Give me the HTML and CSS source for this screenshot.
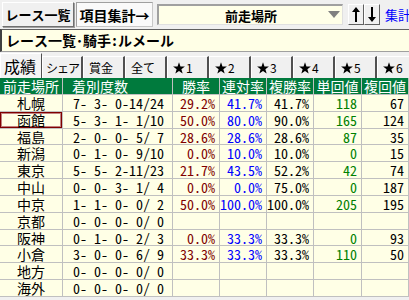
FILE: index.html
```html
<!DOCTYPE html>
<html lang="ja">
<head>
<meta charset="utf-8">
<link rel="stylesheet" href="styles.css">
</head>
<body>
<div class="top">
  <div class="btn b1">レース一覧</div>
  <div class="btn b2">項目集計→</div>
  <div class="sel"><span class="sel-text">前走場所</span><svg class="tri" width="12" height="7" viewBox="0 0 12 7"><polygon points="0,0 12,0 6,7" fill="#808080"/></svg></div>
  <div class="arr up"><svg width="8" height="15" viewBox="0 0 8 15"><path d="M4 0 L8 5 L5 5 L5 15 L3 15 L3 5 L0 5 Z" fill="#000"/></svg></div>
  <div class="arr"><svg width="8" height="15" viewBox="0 0 8 15"><path d="M4 15 L8 10 L5 10 L5 0 L3 0 L3 10 L0 10 Z" fill="#000"/></svg></div>
  <div class="link">集計</div>
</div>
<div class="title">レース一覧･騎手:ルメール</div>
<div class="tabs">
  <div class="tab on">成績</div>
  <div class="tab t2">シェア</div>
  <div class="tab">賞金</div>
  <div class="tab">全て</div>
  <div class="tab"><svg class="st" width="12" height="12" viewBox="0 0 12 12"><polygon points="6,0.3 7.47,4.48 11.9,4.58 8.38,7.27 9.65,11.52 6,9 2.35,11.52 3.62,7.27 0.1,4.58 4.53,4.48" fill="#000"/></svg>1</div>
  <div class="tab"><svg class="st" width="12" height="12" viewBox="0 0 12 12"><polygon points="6,0.3 7.47,4.48 11.9,4.58 8.38,7.27 9.65,11.52 6,9 2.35,11.52 3.62,7.27 0.1,4.58 4.53,4.48" fill="#000"/></svg>2</div>
  <div class="tab"><svg class="st" width="12" height="12" viewBox="0 0 12 12"><polygon points="6,0.3 7.47,4.48 11.9,4.58 8.38,7.27 9.65,11.52 6,9 2.35,11.52 3.62,7.27 0.1,4.58 4.53,4.48" fill="#000"/></svg>3</div>
  <div class="tab"><svg class="st" width="12" height="12" viewBox="0 0 12 12"><polygon points="6,0.3 7.47,4.48 11.9,4.58 8.38,7.27 9.65,11.52 6,9 2.35,11.52 3.62,7.27 0.1,4.58 4.53,4.48" fill="#000"/></svg>4</div>
  <div class="tab"><svg class="st" width="12" height="12" viewBox="0 0 12 12"><polygon points="6,0.3 7.47,4.48 11.9,4.58 8.38,7.27 9.65,11.52 6,9 2.35,11.52 3.62,7.27 0.1,4.58 4.53,4.48" fill="#000"/></svg>5</div>
  <div class="tab"><svg class="st" width="12" height="12" viewBox="0 0 12 12"><polygon points="6,0.3 7.47,4.48 11.9,4.58 8.38,7.27 9.65,11.52 6,9 2.35,11.52 3.62,7.27 0.1,4.58 4.53,4.48" fill="#000"/></svg>6</div>
</div>
<div class="grid">
  <div class="h">前走場所</div><div class="h hl">着別度数</div><div class="h">勝率</div><div class="h">連対率</div><div class="h">複勝率</div><div class="h">単回値</div><div class="h">複回値</div>

  <div class="c n">札幌</div><div class="c d">7- 3- 0-14/24</div><div class="c v r">29.2%</div><div class="c v b">41.7%</div><div class="c v">41.7%</div><div class="c v g">118</div><div class="c v">67</div>
  <div class="c n sel-cell">函館</div><div class="c d">5- 3- 1- 1/10</div><div class="c v r">50.0%</div><div class="c v b">80.0%</div><div class="c v">90.0%</div><div class="c v g">165</div><div class="c v">124</div>
  <div class="c n">福島</div><div class="c d">2- 0- 0- 5/ 7</div><div class="c v r">28.6%</div><div class="c v b">28.6%</div><div class="c v">28.6%</div><div class="c v g">87</div><div class="c v">35</div>
  <div class="c n">新潟</div><div class="c d">0- 1- 0- 9/10</div><div class="c v r">0.0%</div><div class="c v b">10.0%</div><div class="c v">10.0%</div><div class="c v g">0</div><div class="c v">15</div>
  <div class="c n">東京</div><div class="c d">5- 5- 2-11/23</div><div class="c v r">21.7%</div><div class="c v b">43.5%</div><div class="c v">52.2%</div><div class="c v g">42</div><div class="c v">74</div>
  <div class="c n">中山</div><div class="c d">0- 0- 3- 1/ 4</div><div class="c v r">0.0%</div><div class="c v b">0.0%</div><div class="c v">75.0%</div><div class="c v g">0</div><div class="c v">187</div>
  <div class="c n">中京</div><div class="c d">1- 1- 0- 0/ 2</div><div class="c v r">50.0%</div><div class="c v b">100.0%</div><div class="c v">100.0%</div><div class="c v g">205</div><div class="c v">195</div>
  <div class="c n">京都</div><div class="c d">0- 0- 0- 0/ 0</div><div class="c v"></div><div class="c v"></div><div class="c v"></div><div class="c v"></div><div class="c v"></div>
  <div class="c n">阪神</div><div class="c d">0- 1- 0- 2/ 3</div><div class="c v r">0.0%</div><div class="c v b">33.3%</div><div class="c v">33.3%</div><div class="c v g">0</div><div class="c v">93</div>
  <div class="c n">小倉</div><div class="c d">3- 0- 0- 6/ 9</div><div class="c v r">33.3%</div><div class="c v b">33.3%</div><div class="c v">33.3%</div><div class="c v g">110</div><div class="c v">50</div>
  <div class="c n">地方</div><div class="c d">0- 0- 0- 0/ 0</div><div class="c v"></div><div class="c v"></div><div class="c v"></div><div class="c v"></div><div class="c v"></div>
  <div class="c n">海外</div><div class="c d">0- 0- 0- 0/ 0</div><div class="c v"></div><div class="c v"></div><div class="c v"></div><div class="c v"></div><div class="c v"></div>
</div>
</body>
</html>
```

FILE: styles.css
```css
html, body {
  margin: 0;
  padding: 0;
  background: #f0f0f0;
  width: 409px;
  height: 300px;
  overflow: hidden;
  font-family: "Noto Sans Mono CJK JP", "Noto Sans CJK JP", sans-serif;
  font-feature-settings: "hwid" 1;
  color: #000;
}

.top {
  display: flex;
  align-items: center;
  height: 29px;
  padding-left: 2px;
  box-sizing: border-box;
}
.top > * { flex: none; }

.btn {
  height: 25px;
  box-sizing: border-box;
  display: flex;
  align-items: center;
  justify-content: center;
  font-weight: bold;
  font-size: 13px;
  border: 1px solid;
  border-color: #fff #707070 #707070 #fff;
  background: #f0f0f0;
  box-shadow: 1px 1px 0 #a0a0a0;
}
.b1 { width: 72px; }
.b2 {
  width: 77px;
  margin-left: 2px;
  font-size: 14px;
  background: #fafafa;
  border-color: #a0a0a0 #c8c8c8 #c8c8c8 #a0a0a0;
  box-shadow: none;
}

.sel {
  margin-left: 4px;
  width: 186px;
  height: 21px;
  box-sizing: border-box;
  background: #ffffe8;
  border-top: 2px solid #a0a0a0;
  border-left: 2px solid #a0a0a0;
  border-right: 1px solid #e0e0e0;
  border-bottom: 1px solid #e0e0e0;
  display: flex;
  align-items: center;
  position: relative;
}
.sel-text {
  font-weight: bold;
  font-size: 13px;
  margin-left: 66px;
}
.tri {
  position: absolute;
  right: 2px;
  top: 5px;
}

.arr {
  width: 16px;
  height: 21px;
  box-sizing: border-box;
  border: 1px solid;
  border-color: #fff #606060 #606060 #fff;
  background: #f0f0f0;
  display: flex;
  align-items: center;
  justify-content: center;
}
.arr.up { margin-left: 5px; }

.link {
  margin-left: 5px;
  color: #0000ff;
  font-size: 13px;
  white-space: nowrap;
  flex: 1 1 auto !important;
  min-width: 0;
  overflow: hidden;
}

.title {
  height: 23px;
  box-sizing: border-box;
  background: #ffffe6;
  border-top: 1px solid #606060;
  border-left: 2px solid #404040;
  border-bottom: 1px solid #a0a0a0;
  font-weight: bold;
  font-size: 14px;
  line-height: 21px;
  padding-left: 4px;
  white-space: nowrap;
}

.tabs {
  display: flex;
  height: 26px;
  align-items: flex-end;
  overflow: hidden;
}
.tab {
  width: 42px;
  flex: none;
  height: 22px;
  box-sizing: border-box;
  border-top: 1px solid #fff;
  border-left: 1px solid #fff;
  border-right: 2px solid #505050;
  background: #f0f0f0;
  font-family: "Noto Sans CJK JP", sans-serif;
  font-feature-settings: normal;
  font-size: 12px;
  line-height: 21px;
  padding-left: 5px;
  white-space: nowrap;
  overflow: hidden;
}
.tab.on {
  height: 25px;
  font-size: 16px;
  line-height: 24px;
  padding-left: 3px;
  border-right: 1px solid #505050;
  background: #f4f4f4;
}
.tab.t2 {
  width: 41px;
  padding-left: 3px;
  letter-spacing: -1px;
}
.st {
  vertical-align: -1px;
  margin-right: 1px;
}

.grid {
  display: grid;
  grid-template-columns: 62px 109px 46px 46px 46px 47px 46px;
  grid-template-rows: 16px repeat(12, 15.83px);
  gap: 1px;
  background: #c0c0c0;
  border-right: 1px solid #c0c0c0;
  border-bottom: 1px solid #c0c0c0;
  width: 409px;
  box-sizing: border-box;
}

.h {
  background: #007a3d;
  color: #fff;
  font-size: 14px;
  line-height: 16px;
  text-align: center;
  white-space: nowrap;
  overflow: hidden;
}
.hl {
  text-align: left;
  padding-left: 9px;
}

.c {
  background: #ffffe6;
  font-size: 14px;
  line-height: 16px;
  white-space: pre;
  overflow: hidden;
}
.n { text-align: center; }
.d { text-align: center; padding-left: 2px; }
.v { text-align: right; padding-right: 4px; }
.r { color: #800000; }
.b { color: #0000ff; }
.g { color: #008000; }

.sel-cell {
  box-shadow: inset 0 0 0 1px #800000, inset 0 0 0 2px #c08080;
}
```
